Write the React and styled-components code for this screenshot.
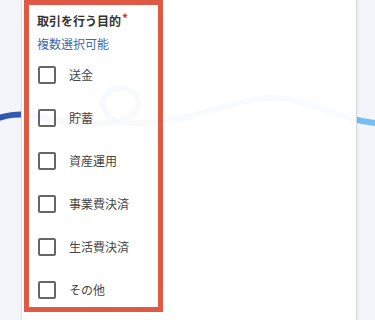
import React from "react";
import styled, { createGlobalStyle } from "styled-components";

const Global = createGlobalStyle`
  html, body { margin: 0; padding: 0; }
  body {
    background: #f3f5fa;
    font-family: "Noto Sans CJK JP", "Noto Sans", sans-serif;
  }
`;

const Page = styled.div`
  position: relative;
  width: 375px;
  height: 320px;
  overflow: hidden;
  background: #f3f5fa;
`;

const Wave = styled.svg`
  position: absolute;
  left: 0;
  top: 0;
  width: 375px;
  height: 320px;
  pointer-events: none;
`;

const Card = styled.div`
  position: relative;
  box-sizing: border-box;
  margin-left: 21px;
  width: 336px;
  height: 320px;
  padding-left: 2px;
  background: rgba(255, 255, 255, 0.96);
  border-left: 1px solid #dcdfe5;
  border-right: 1px solid #d6d9df;
  box-shadow: 1px 0 2px rgba(0, 0, 0, 0.06);
`;

const Highlight = styled.div`
  box-sizing: border-box;
  width: 139px;
  height: 312px;
  border: 5px solid #de5a45;
  padding: 3px 0 0 8px;
`;

const Title = styled.div`
  font-size: 12px;
  line-height: 20px;
  font-weight: 700;
  color: #333333;
  white-space: nowrap;
`;

const Required = styled.span`
  color: #d8322a;
  font-size: 12px;
  font-weight: 700;
  vertical-align: 3px;
  margin-left: 1px;
`;

const Hint = styled.div`
  margin-top: 4px;
  font-size: 12px;
  line-height: 18px;
  color: #3f6aab;
`;

const List = styled.div`
  display: flex;
  flex-direction: column;
`;

const Row = styled.label`
  display: flex;
  align-items: center;
  height: 43px;
  gap: 13px;
  padding-left: 1px;
  cursor: pointer;
`;

const Box = styled.span`
  box-sizing: border-box;
  width: 18px;
  height: 18px;
  border: 2px solid #676767;
  border-radius: 2px;
  flex: none;
`;

const Label = styled.span`
  font-size: 12px;
  color: #444444;
  white-space: nowrap;
`;

const options = ["送金", "貯蓄", "資産運用", "事業費決済", "生活費決済", "その他"];

export default function App() {
  return (
    <>
      <Global />
      <Page>
        <Wave viewBox="0 0 375 320">
          <defs>
            <linearGradient id="wg" x1="0" y1="0" x2="375" y2="0" gradientUnits="userSpaceOnUse">
              <stop offset="0" stopColor="#2c57ae" />
              <stop offset="0.45" stopColor="#4f8fd8" />
              <stop offset="1" stopColor="#78c0f4" />
            </linearGradient>
          </defs>
          <path
            d="M -10 121 C 5 115, 20 112, 40 117 C 62 123, 92 127, 120 121 C 140 116, 146 95, 126 89 C 106 84, 95 104, 110 117 C 125 129, 160 122, 190 116 C 228 106, 258 94, 290 99 C 320 105, 340 119, 375 123"
            fill="none"
            stroke="url(#wg)"
            strokeWidth="6"
            strokeLinecap="round"
          />
        </Wave>
        <Card>
          <Highlight>
            <Title>
              取引を行う目的<Required>*</Required>
            </Title>
            <Hint>複数選択可能</Hint>
            <List>
              {options.map((o) => (
                <Row key={o}>
                  <Box />
                  <Label>{o}</Label>
                </Row>
              ))}
            </List>
          </Highlight>
        </Card>
      </Page>
    </>
  );
}
